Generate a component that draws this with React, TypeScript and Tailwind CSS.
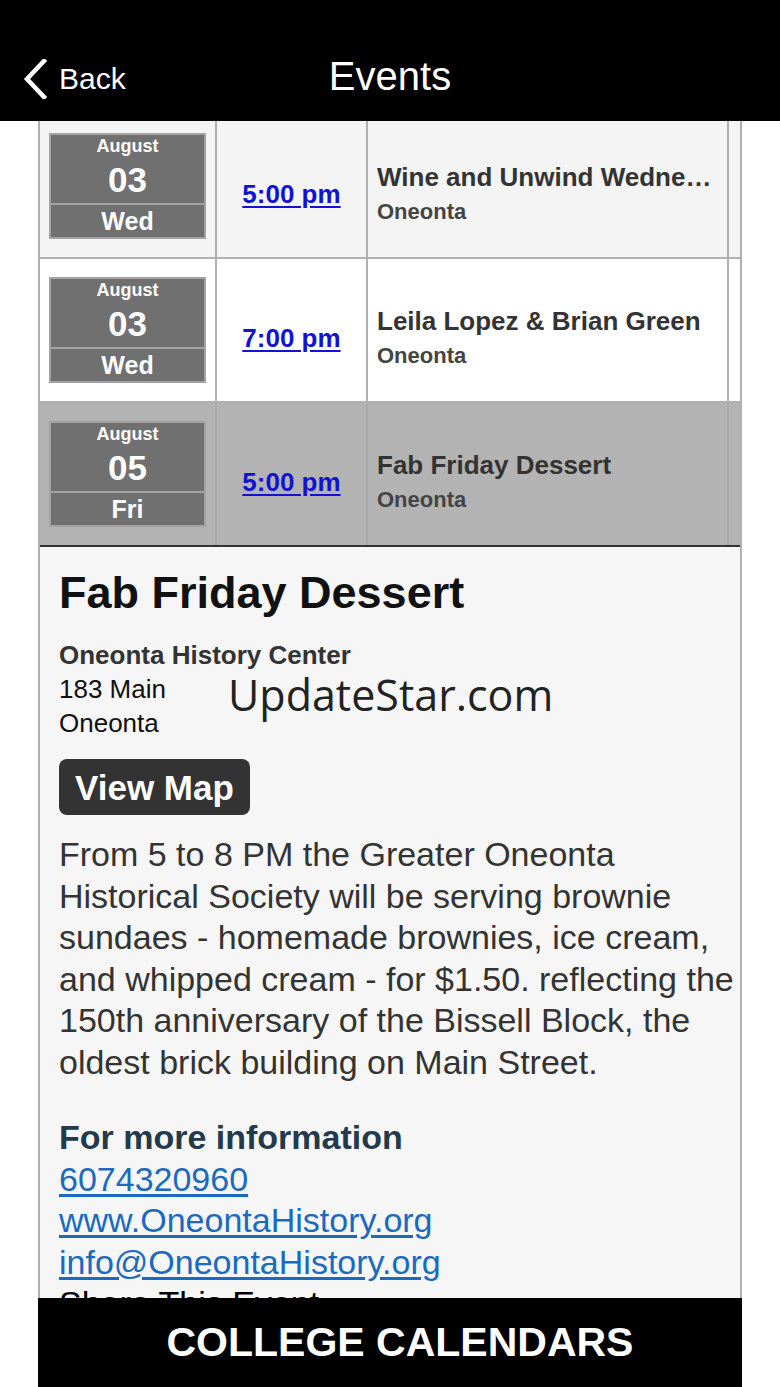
import React from "react";

type EventRow = {
  month: string;
  day: string;
  weekday: string;
  time: string;
  title: string;
  place: string;
  selected?: boolean;
  tint: string;
};

const events: EventRow[] = [
  {
    month: "August",
    day: "03",
    weekday: "Wed",
    time: "5:00 pm",
    title: "Wine and Unwind Wednesday",
    place: "Oneonta",
    tint: "bg-[#f4f4f4]",
  },
  {
    month: "August",
    day: "03",
    weekday: "Wed",
    time: "7:00 pm",
    title: "Leila Lopez & Brian Green",
    place: "Oneonta",
    tint: "bg-white",
  },
  {
    month: "August",
    day: "05",
    weekday: "Fri",
    time: "5:00 pm",
    title: "Fab Friday Dessert",
    place: "Oneonta",
    selected: true,
    tint: "bg-[#b3b3b3]",
  },
];

const DateBox = ({ month, day, weekday }: { month: string; day: string; weekday: string }) => (
  <div className="w-[157px] border-2 border-[#a3a3a3] bg-[#707070] text-white font-bold">
    <div className="h-[68px] flex flex-col items-center">
      <span className="text-[18px] leading-[22px]">{month}</span>
      <span className="mt-[4px] text-[35px] leading-[38px]">{day}</span>
    </div>
    <div className="h-[34px] border-t-2 border-[#a3a3a3] flex items-center justify-center text-[25px] leading-none">
      {weekday}
    </div>
  </div>
);

const Row = ({ ev }: { ev: EventRow }) => {
  const line = ev.selected ? "border-[#a9a9a9]" : "border-[#b0b0b0]";
  return (
    <div className={`flex h-[144px] border-b-2 ${ev.selected ? "border-b-[#333]" : "border-b-[#b0b0b0]"} ${ev.tint}`}>
      <div className={`w-[177px] flex items-center pl-[9px] border-r-2 ${line}`}>
        <DateBox month={ev.month} day={ev.day} weekday={ev.weekday} />
      </div>
      <div className={`w-[151px] flex items-center justify-center pt-[16px] border-r-2 ${line}`}>
        <a className="text-[26px] leading-[30px] font-bold text-[#1212d4] underline underline-offset-[3px]">
          {ev.time}
        </a>
      </div>
      <div className={`w-[361px] flex flex-col justify-center pt-[16px] pl-[9px] pr-[10px] border-r-2 ${line}`}>
        <div className="text-[26px] leading-[30px] font-bold text-[#333] truncate">{ev.title}</div>
        <div className="text-[22px] leading-[28px] font-bold text-[#444] mt-[6px]">{ev.place}</div>
      </div>
      <div className="flex-1" />
    </div>
  );
};

export default function App() {
  return (
    <div
      className="w-[780px] h-[1387px] bg-white flex flex-col overflow-hidden"
      style={{ fontFamily: '"Liberation Sans", Arial, sans-serif' }}
    >
      {/* nav bar */}
      <div className="h-[121px] shrink-0 bg-black relative z-10 flex items-end pb-[22px]">
        <div className="flex items-center pl-[22px] text-white">
          <svg width="26" height="40" viewBox="0 0 26 40" fill="none">
            <path d="M22 2 L5 20 L22 38" stroke="white" strokeWidth="4.5" strokeLinecap="square" />
          </svg>
          <span className="ml-[11px] text-[30px] leading-[40px]">Back</span>
        </div>
        <div className="absolute left-0 right-0 bottom-[22px] text-center text-white text-[40px] leading-[46px]">
          Events
        </div>
      </div>

      {/* scrolled content */}
      <div className="flex-1 overflow-hidden">
        <div className="w-[704px] mx-auto -mt-[6px] border-x-2 border-[#b0b0b0]">
          {events.map((ev, i) => (
            <Row key={i} ev={ev} />
          ))}

          {/* event detail */}
          <div className="relative bg-[#f6f6f6] pl-[19px] pr-[4px] pt-[23px] pb-[40px] text-[#333]">
            <h1 className="text-[45px] leading-[45px] font-bold text-[#111]">Fab Friday Dessert</h1>

            <div className="mt-[23px] text-[26px] leading-[34px]">
              <div className="font-bold">Oneonta History Center</div>
              <div className="text-[#111]">183 Main</div>
              <div className="text-[#111]">Oneonta</div>
            </div>

            <div
              className="absolute left-[188px] top-[123px] text-[43px] leading-[50px] text-[#222]"
              style={{ fontFamily: '"Open Sans", "Noto Sans", sans-serif' }}
            >
              UpdateStar.com
            </div>

            <button className="mt-[19px] h-[56px] px-[16px] rounded-[8px] bg-[#333] text-white text-[35px] leading-none font-bold">
              View Map
            </button>

            <p className="mt-[19px] text-[34px] leading-[41.5px] text-[#333]">
              From 5 to 8 PM the Greater Oneonta Historical Society will be serving brownie sundaes - homemade
              brownies, ice cream, and whipped cream - for $1.50. reflecting the 150th anniversary of the Bissell
              Block, the oldest brick building on Main Street.
            </p>

            <div className="mt-[34px] text-[34px] leading-[41.5px]">
              <div className="font-bold text-[#233a4c]">For more information</div>
              <a className="block text-[#1a6bc0] underline underline-offset-[3px]">6074320960</a>
              <a className="block text-[#1a6bc0] underline underline-offset-[3px]">www.OneontaHistory.org</a>
              <a className="block text-[#1a6bc0] underline underline-offset-[3px]">info@OneontaHistory.org</a>
              <div className="text-black">Share This Event</div>
            </div>
          </div>
        </div>
      </div>

      {/* bottom bar */}
      <div className="h-[89px] shrink-0 w-[704px] mx-auto bg-black flex items-center justify-center">
        <span className="text-white text-[41px] font-bold leading-none pl-[20px]">COLLEGE CALENDARS</span>
      </div>
    </div>
  );
}
